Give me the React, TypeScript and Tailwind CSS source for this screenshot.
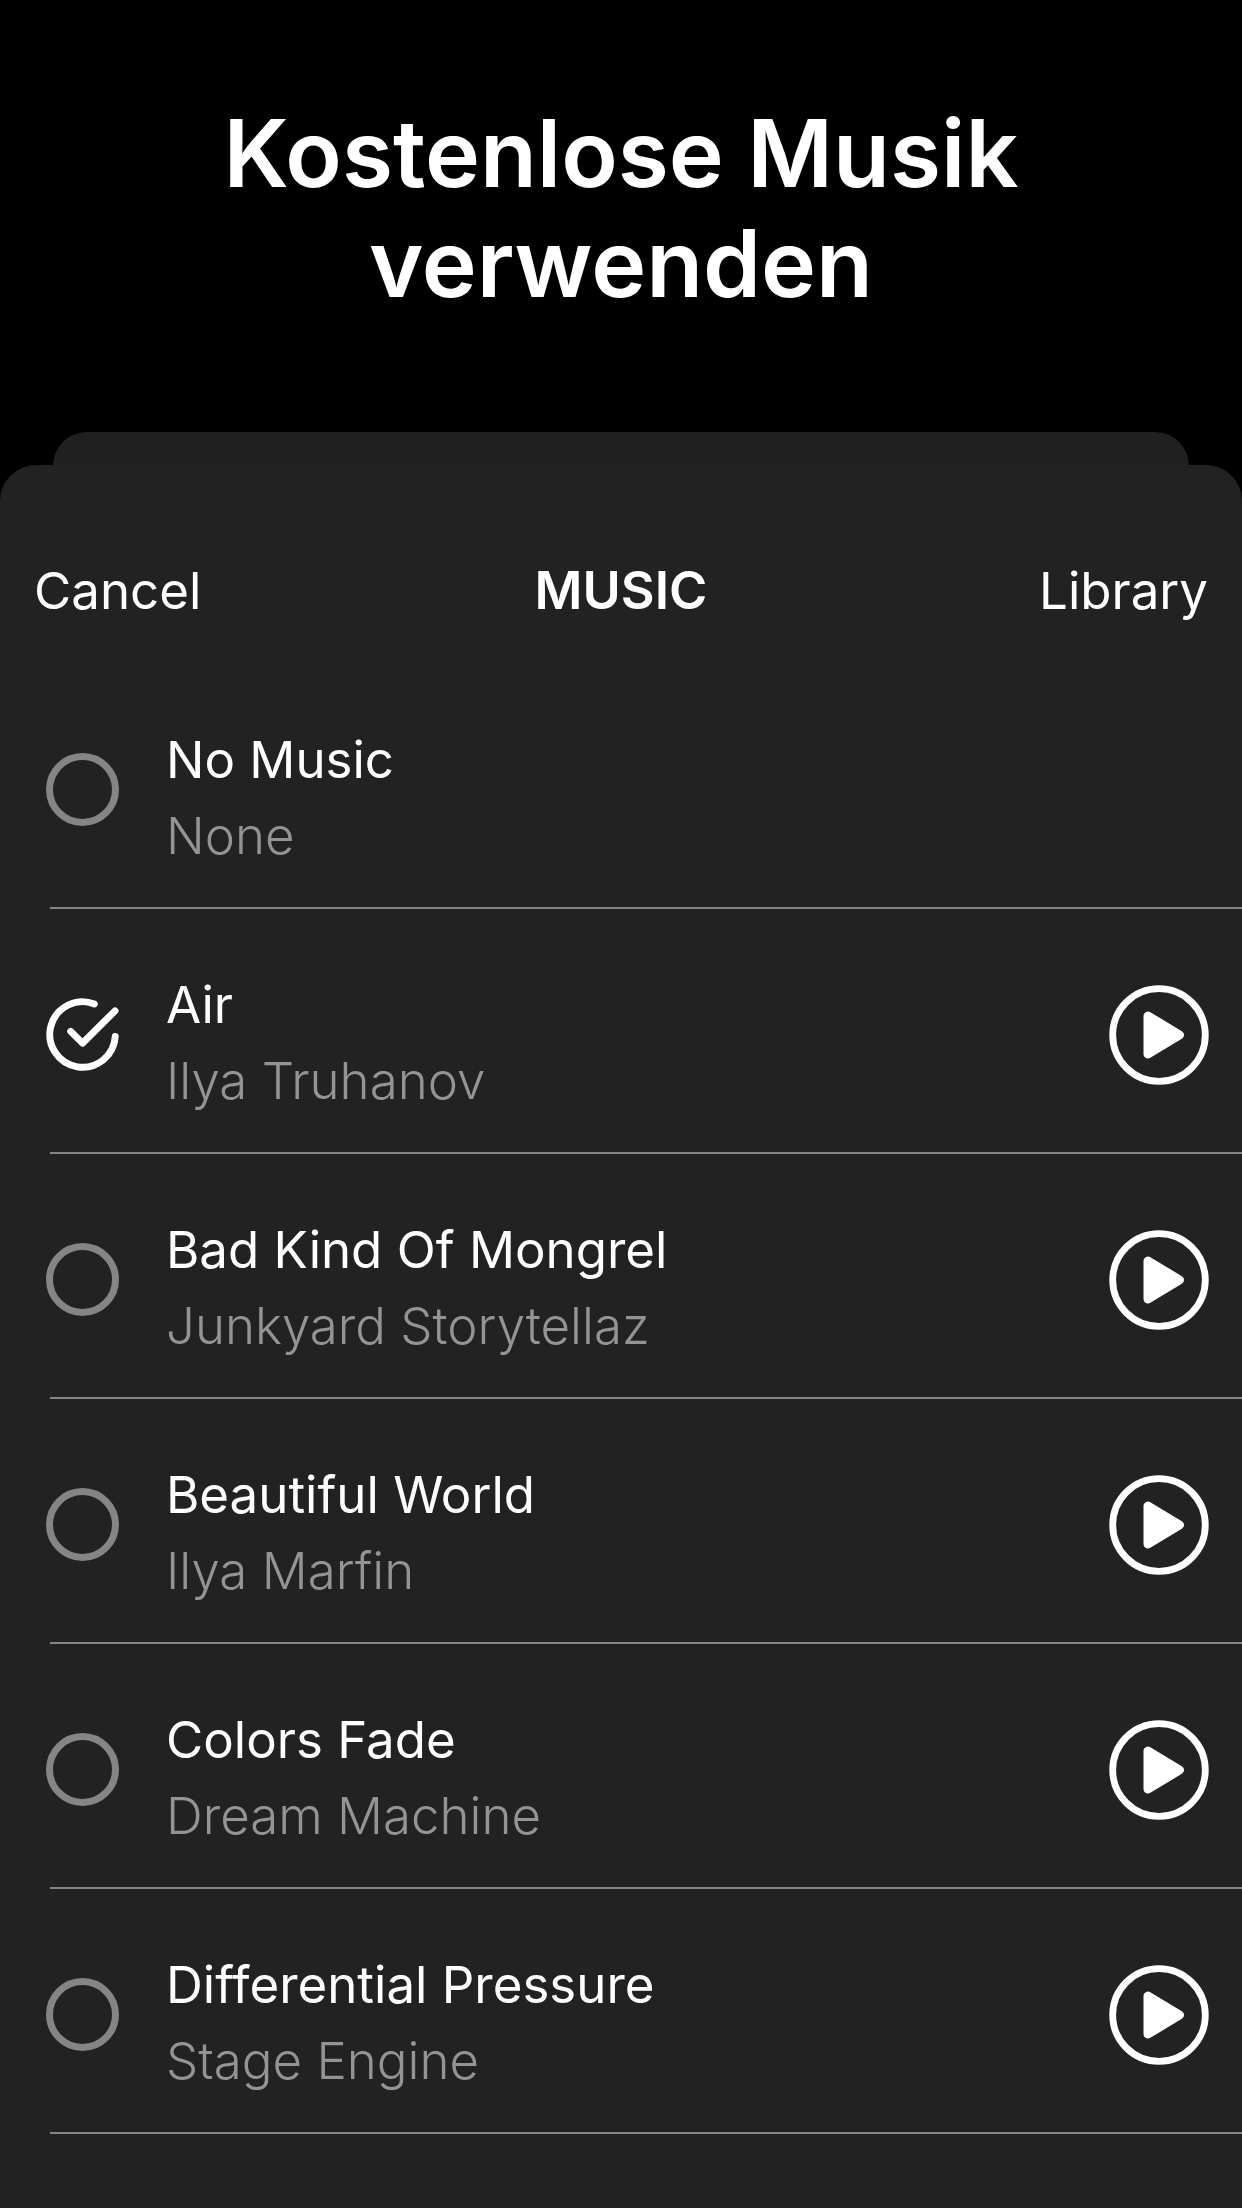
import { useState } from "react";

type Track = { id: string; title: string; artist: string; playable: boolean };

const tracks: Track[] = [
  { id: "none", title: "No Music", artist: "None", playable: false },
  { id: "air", title: "Air", artist: "Ilya Truhanov", playable: true },
  { id: "mongrel", title: "Bad Kind Of Mongrel", artist: "Junkyard Storytellaz", playable: true },
  { id: "world", title: "Beautiful World", artist: "Ilya Marfin", playable: true },
  { id: "colors", title: "Colors Fade", artist: "Dream Machine", playable: true },
  { id: "pressure", title: "Differential Pressure", artist: "Stage Engine", playable: true },
];

function CheckIcon() {
  return (
    <svg
      viewBox="-37 -37 74 74"
      className="pointer-events-none absolute inset-0 size-full"
      fill="none"
      stroke="currentColor"
      strokeWidth="7"
      strokeLinecap="round"
      strokeLinejoin="round"
      aria-hidden="true"
    >
      <path d="M33.2 2A33.2 33.2 0 1 1 12 -31" />
      <path d="M-12 -3.2L0 8.8L33 -24" />
    </svg>
  );
}

function PlayIcon() {
  return (
    <svg viewBox="0 0 100 100" className="size-full" aria-hidden="true">
      <circle cx="50" cy="50" r="46.3" fill="none" stroke="currentColor" strokeWidth="6.8" />
      <path
        d="M39 31V69L70.5 50Z"
        fill="currentColor"
        stroke="currentColor"
        strokeWidth="9"
        strokeLinejoin="round"
      />
    </svg>
  );
}

function TrackRow({ track, checked, onSelect }: { track: Track; checked: boolean; onSelect: () => void }) {
  return (
    <li>
      <div className="flex h-[243px] items-center pt-2 pr-[33px] pl-[46px]">
        <label className="flex min-w-0 flex-1 items-center gap-[47px]">
          <span className="relative size-[73px] shrink-0">
            <input
              type="radio"
              name="track"
              checked={checked}
              onChange={onSelect}
              className="block size-full appearance-none rounded-full border-[7px] border-[#858585] checked:border-transparent"
            />
            {checked && <CheckIcon />}
          </span>
          <span className="flex min-w-0 flex-col pt-4 text-[51px] leading-[76px]">
            <span>{track.title}</span>
            <span className="font-light text-[#949494]">{track.artist}</span>
          </span>
        </label>
        {track.playable && (
          <button type="button" aria-label={`Play ${track.title}`} className="size-[100px] shrink-0">
            <PlayIcon />
          </button>
        )}
      </div>
      <div className="ml-[50px] h-[2px] bg-[#858585]" />
    </li>
  );
}

export default function App() {
  const [selected, setSelected] = useState("air");

  return (
    <main className="flex min-h-screen flex-col bg-black font-['Inter',sans-serif] text-[52px] text-white">
      <h1 className="px-48 pt-[98px] pb-[114px] text-center text-[93px] leading-[110px] font-semibold">
        Kostenlose Musik verwenden
      </h1>
      <div className="mx-[53px] -mb-10 h-[73px] rounded-t-[34px] bg-[#202020]" />
      <section className="relative flex-1 rounded-t-[36px] bg-[#222223]">
        <header className="grid grid-cols-[1fr_auto_1fr] items-center px-[34px] pt-[88px] pb-[35px] leading-[76px]">
          <button type="button" className="justify-self-start text-[51px]">Cancel</button>
          <h2 className="font-semibold">MUSIC</h2>
          <button type="button" className="justify-self-end text-[51px]">Library</button>
        </header>
        <ul>
          {tracks.map((t) => (
            <TrackRow key={t.id} track={t} checked={selected === t.id} onSelect={() => setSelected(t.id)} />
          ))}
        </ul>
      </section>
    </main>
  );
}
